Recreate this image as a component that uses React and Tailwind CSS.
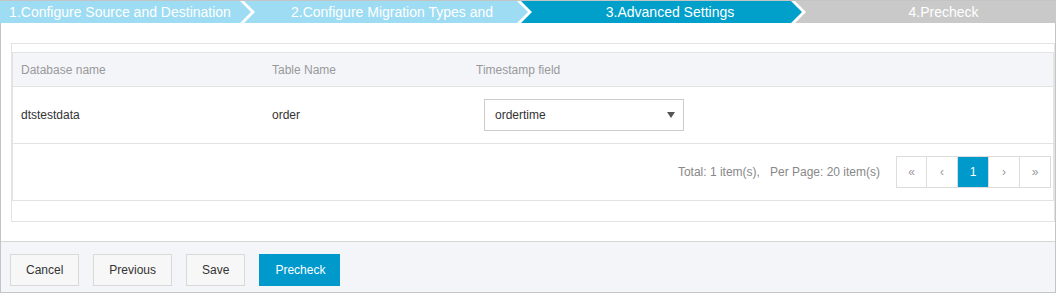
const steps = [
  { label: "1.Configure Source and Destination", cls: "w-[251px] bg-[#9ddcf2] [clip-path:polygon(0_0,calc(100%_-_11px)_0,100%_50%,calc(100%_-_11px)_100%,0_100%)]" },
  { label: "2.Configure Migration Types and", cls: "w-[284px] -ml-[7px] pl-[23px] bg-[#9ddcf2] [clip-path:polygon(0_0,calc(100%_-_11px)_0,100%_50%,calc(100%_-_11px)_100%,0_100%,11px_50%)]" },
  { label: "3.Advanced Settings", cls: "w-[281px] -ml-[7px] pl-[28px] bg-[#00a0ca] [clip-path:polygon(0_0,calc(100%_-_11px)_0,100%_50%,calc(100%_-_11px)_100%,0_100%,11px_50%)]" },
  { label: "4.Precheck", cls: "flex-1 -ml-[7px] pl-[47px] bg-[#c9c9c9] [clip-path:polygon(0_0,100%_0,100%_100%,0_100%,11px_50%)]" },
];

const PageButton = ({ children, active, first }) => (
  <div
    className={
      "w-[31px] h-[32px] flex items-center justify-center border-y border-r border-[#dcdcdc] " +
      (first ? "border-l " : "") +
      (active ? "bg-[#0099cc] text-white border-[#0099cc]" : "bg-white text-[#999]")
    }
  >
    {children}
  </div>
);

const FooterButton = ({ children, primary }) => (
  <button
    className={
      "h-[32px] px-[15px] border text-[12px] " +
      (primary
        ? "bg-[#0099cc] border-[#0099cc] text-white w-[81px]"
        : "bg-[#f7f7f7] border-[#d9d9d9] text-[#333]")
    }
  >
    {children}
  </button>
);

export default function App() {
  return (
    <div className="w-[1056px] h-[293px] flex flex-col bg-white border-t border-[#c4c4c4] font-['Liberation_Sans',Arial,sans-serif]">
      {/* Steps */}
      <div className="h-[22px] flex bg-white text-white text-[14px] leading-[22px] shrink-0">
        {steps.map((s) => (
          <div key={s.label} className={"h-[22px] flex justify-center whitespace-nowrap overflow-hidden " + s.cls}>
            <span className="pr-[11px]">{s.label}</span>
          </div>
        ))}
      </div>

      <div className="flex-1 flex flex-col border-x border-b border-[#c4c4c4]">
        {/* Body */}
        <div className="pt-[20px] pb-[19px] pl-[10px]">
          <div className="h-[179px] border border-[#e3e3e3] pt-[8px]">
            <div className="border-l border-r border-[#e3e3e3] text-[12px]">
              {/* Header */}
              <div className="h-[35px] flex items-center bg-[#f4f5f9] border-y border-[#e3e3e3] text-[#999]">
                <div className="w-[251px] pl-[8px]">Database name</div>
                <div className="w-[204px] pl-[8px]">Table Name</div>
                <div className="pl-[8px]">Timestamp field</div>
              </div>
              {/* Row */}
              <div className="h-[57px] flex items-center border-b border-[#e3e3e3] text-[#333]">
                <div className="w-[251px] pl-[8px]">dtstestdata</div>
                <div className="w-[204px] pl-[8px]">order</div>
                <div className="pl-[16px]">
                  <div className="w-[200px] h-[32px] border border-[#cccccc] flex items-center justify-between pl-[10px] pr-[8px] bg-white">
                    <span>ordertime</span>
                    <svg width="8" height="6" viewBox="0 0 8 6">
                      <polygon points="0,0 8,0 4,6" fill="#555" />
                    </svg>
                  </div>
                </div>
              </div>
              {/* Pagination */}
              <div className="h-[57px] flex items-center justify-end border-b border-[#e3e3e3] pr-[2px]">
                <div className="text-[#888] mr-[16px]">
                  Total: 1 item(s),<span className="ml-[10px]">Per Page: 20 item(s)</span>
                </div>
                <div className="flex">
                  <PageButton first>«</PageButton>
                  <PageButton>‹</PageButton>
                  <PageButton active>1</PageButton>
                  <PageButton>›</PageButton>
                  <PageButton>»</PageButton>
                </div>
              </div>
            </div>
          </div>
        </div>

        {/* Footer */}
        <div className="flex-1 bg-[#f4f5f9] border-t border-[#d6d6d6] pt-[12px] pl-[9px] flex items-start gap-[14px]">
          <FooterButton>Cancel</FooterButton>
          <FooterButton>Previous</FooterButton>
          <FooterButton>Save</FooterButton>
          <FooterButton primary>Precheck</FooterButton>
        </div>
      </div>
    </div>
  );
}
